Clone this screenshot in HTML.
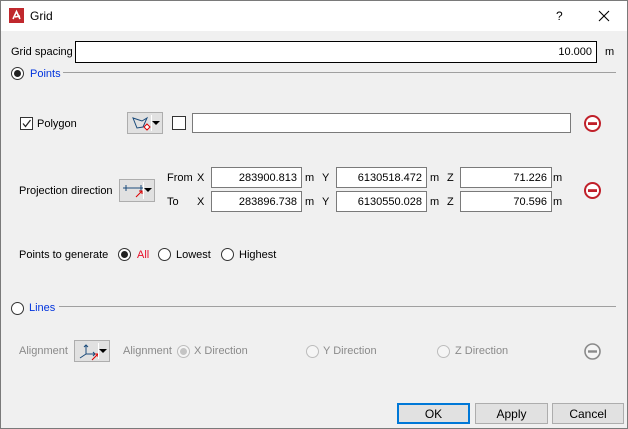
<!DOCTYPE html>
<html><head><style>
*{box-sizing:border-box;margin:0;padding:0}
body{width:628px;height:429px;overflow:hidden;background:#f0f0f0;font-family:"Liberation Sans",sans-serif;font-size:11px;color:#000;position:relative}
.win{position:absolute;left:0;top:0;width:628px;height:429px;border:1px solid #7a7a7a}
.a{position:absolute;white-space:nowrap;line-height:14px}
.inp{position:absolute;background:#fff;border:1px solid #7a7a7a;display:flex;align-items:center;justify-content:flex-end;padding-right:4px}
.rad{position:absolute;width:13px;height:13px;border:1px solid #333;border-radius:50%;background:#fff}
.rad.on::after{content:"";position:absolute;left:2px;top:2px;width:7px;height:7px;border-radius:50%;background:#222}
.rad.dis{border-color:#bcbcbc;background:#f5f5f5}
.rad.dis.on::after{background:#c4c4c4}
.btn{position:absolute;border:1px solid #adadad;background:#e1e1e1;display:flex;align-items:center;justify-content:center;font-size:12px}
.ib{position:absolute;border:1px solid #adadad;background:#e1e1e1}
.ib .sep{position:absolute;right:10px;top:2px;bottom:2px;border-left:1px solid #fff}
.ib .dd{position:absolute;right:2px;top:8px;border-left:4px solid transparent;border-right:4px solid transparent;border-top:4px solid #000}
.g{color:#8a8a8a}
.line{position:absolute;height:1px;background:#a0a0a0}
</style></head><body>
<div class="win"></div>
<div style="position:absolute;left:1px;top:1px;width:626px;height:30px;background:#fff"></div>
<svg style="position:absolute;left:9px;top:8px" width="15" height="15"><rect width="15" height="15" fill="#c0282d"/><path d="M4 11 L7.5 3.5 L11 11 M6 9 L11 8" stroke="#fff" stroke-width="1.6" fill="none"/></svg>
<div class="a" style="left:30px;top:9px;font-size:12px">Grid</div>
<div class="a" style="left:556px;top:9px;font-size:12px">?</div>
<svg style="position:absolute;left:598px;top:10px" width="12" height="12"><path d="M1 1L11 11M11 1L1 11" stroke="#000" stroke-width="1.1"/></svg>

<div class="a" style="left:11px;top:45px">Grid spacing</div>
<div class="inp" style="left:75px;top:41px;width:522px;height:22px;border-color:#000">10.000</div>
<div class="a" style="left:605px;top:45px">m</div>

<div class="rad on" style="left:11px;top:67px"></div>
<div class="a" style="left:30px;top:67px;color:#0033dd">Points</div>
<div class="line" style="left:63px;top:72px;width:553px"></div>

<div style="position:absolute;left:20px;top:117px;width:13px;height:13px;border:1px solid #333;background:#fff"></div>
<svg style="position:absolute;left:21px;top:118px" width="11" height="11"><path d="M2 5.5L4.5 8.5L9.5 2" stroke="#222" stroke-width="1.2" fill="none"/></svg>
<div class="a" style="left:37px;top:117px">Polygon</div>
<div class="ib" style="left:127px;top:112px;width:36px;height:22px"><svg style="position:absolute;left:3px;top:3px" width="20" height="16"><path d="M2 2L6 12L12 11L16 2L11 5Z" stroke="#1a4a7a" fill="none"/><path d="M13 11l3 3l3-3l-3-3z" stroke="#d00" fill="#fff"/></svg><div class="sep"></div><div class="dd"></div></div>
<div style="position:absolute;left:172px;top:116px;width:14px;height:14px;border:1px solid #333;background:#fff"></div>
<div class="inp" style="left:192px;top:113px;width:379px;height:20px"></div>
<svg style="position:absolute;left:583px;top:114px" width="19" height="19"><circle cx="9.5" cy="9.5" r="7.5" fill="#fff" stroke="#c0202a" stroke-width="2"/><rect x="5" y="8.2" width="9" height="2.8" fill="#c0202a"/></svg>

<div class="a" style="left:19px;top:184px">Projection direction</div>
<div class="ib" style="left:119px;top:179px;width:36px;height:23px"><svg style="position:absolute;left:2px;top:3px" width="24" height="16"><path d="M1 5H22M4 2V8M19 2V8" stroke="#1a4a7a" fill="none"/><path d="M14 14L20 8M17 8H20V11" stroke="#d00" fill="none"/></svg><div class="sep"></div><div class="dd"></div></div>
<div class="a" style="left:167px;top:171px">From</div><div class="a" style="left:197px;top:171px">X</div>
<div class="inp" style="left:211px;top:167px;width:91px;height:21px">283900.813</div><div class="a" style="left:305px;top:171px">m</div>
<div class="a" style="left:322px;top:171px">Y</div>
<div class="inp" style="left:336px;top:167px;width:91px;height:21px">6130518.472</div><div class="a" style="left:430px;top:171px">m</div>
<div class="a" style="left:447px;top:171px">Z</div>
<div class="inp" style="left:460px;top:167px;width:92px;height:21px">71.226</div><div class="a" style="left:553px;top:171px">m</div>
<div class="a" style="left:167px;top:195px">To</div><div class="a" style="left:197px;top:195px">X</div>
<div class="inp" style="left:211px;top:191px;width:91px;height:21px">283896.738</div><div class="a" style="left:305px;top:195px">m</div>
<div class="a" style="left:322px;top:195px">Y</div>
<div class="inp" style="left:336px;top:191px;width:91px;height:21px">6130550.028</div><div class="a" style="left:430px;top:195px">m</div>
<div class="a" style="left:447px;top:195px">Z</div>
<div class="inp" style="left:460px;top:191px;width:92px;height:21px">70.596</div><div class="a" style="left:553px;top:195px">m</div>
<svg style="position:absolute;left:583px;top:181px" width="19" height="19"><circle cx="9.5" cy="9.5" r="7.5" fill="#fff" stroke="#c0202a" stroke-width="2"/><rect x="5" y="8.2" width="9" height="2.8" fill="#c0202a"/></svg>

<div class="a" style="left:19px;top:248px">Points to generate</div>
<div class="rad on" style="left:118px;top:248px"></div><div class="a" style="left:137px;top:248px;color:#e8102a">All</div>
<div class="rad" style="left:158px;top:248px"></div><div class="a" style="left:176px;top:248px">Lowest</div>
<div class="rad" style="left:221px;top:248px"></div><div class="a" style="left:239px;top:248px">Highest</div>

<div class="rad" style="left:11px;top:302px"></div>
<div class="a" style="left:29px;top:301px;color:#0033dd">Lines</div>
<div class="line" style="left:59px;top:306px;width:557px"></div>

<div class="a g" style="left:19px;top:344px">Alignment</div>
<div class="ib" style="left:74px;top:340px;width:36px;height:22px"><svg style="position:absolute;left:2px;top:2px" width="24" height="18"><path d="M9 2V11H18M9 11L3 15M7 4L9 2L11 4M16 9L18 11L16 13" stroke="#1a4a7a" fill="none"/><path d="M15 17L21 11M18 11H21V14" stroke="#d00" fill="none"/></svg><div class="sep"></div><div class="dd"></div></div>
<div class="a g" style="left:123px;top:344px">Alignment</div>
<div class="rad dis on" style="left:177px;top:345px"></div><div class="a g" style="left:194px;top:344px">X Direction</div>
<div class="rad dis" style="left:306px;top:345px"></div><div class="a g" style="left:323px;top:344px">Y Direction</div>
<div class="rad dis" style="left:437px;top:345px"></div><div class="a g" style="left:455px;top:344px">Z Direction</div>
<svg style="position:absolute;left:583px;top:342px" width="19" height="19"><circle cx="9.5" cy="9.5" r="7.5" fill="#f5f5f5" stroke="#8a8a8a" stroke-width="1.6"/><rect x="5" y="8.3" width="9" height="2.4" fill="#8a8a8a"/></svg>

<div class="btn" style="left:397px;top:403px;width:73px;height:21px;border:2px solid #0078d7">OK</div>
<div class="btn" style="left:475px;top:403px;width:73px;height:21px">Apply</div>
<div class="btn" style="left:552px;top:403px;width:72px;height:21px">Cancel</div>
</body></html>
